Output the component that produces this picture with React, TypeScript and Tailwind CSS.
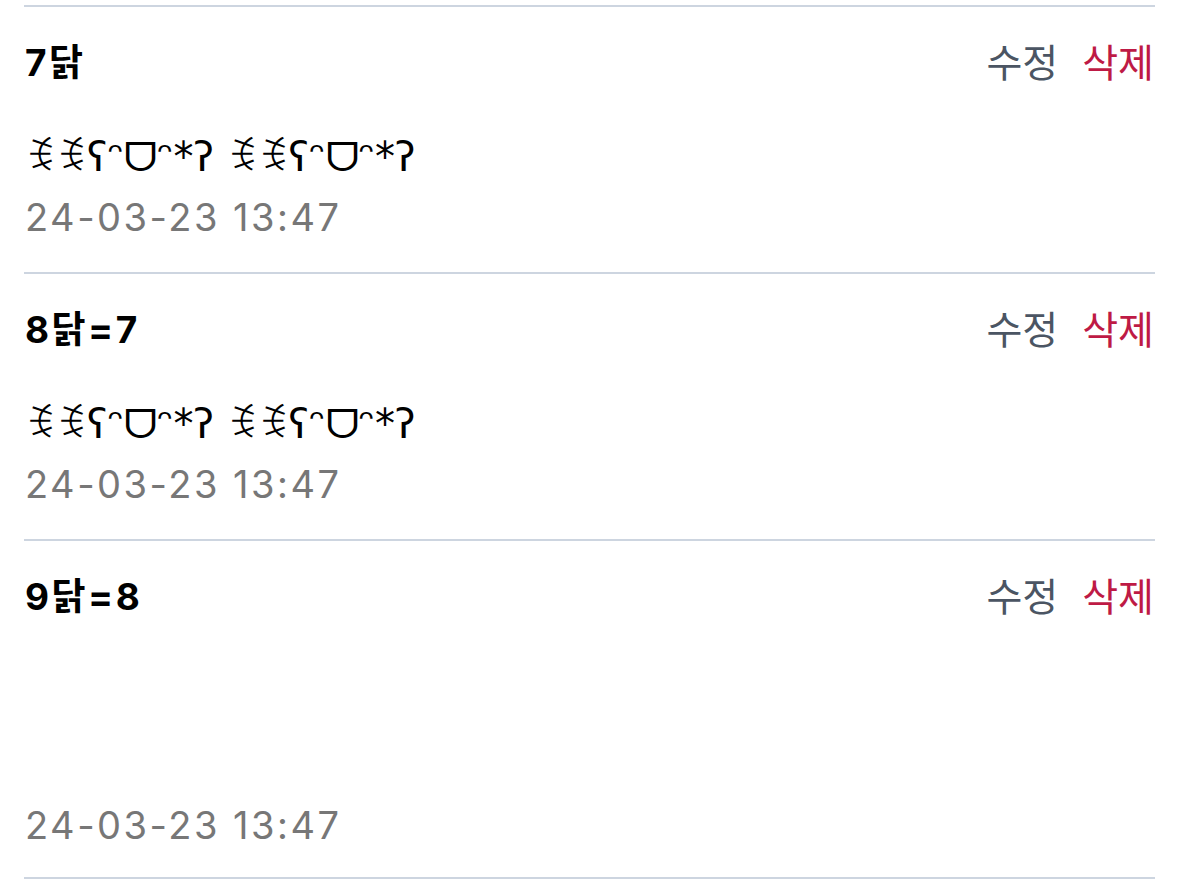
import React from "react";

type Item = { title: string; content: string; date: string };

const items: Item[] = [
  { title: "7닭", content: "ꉂꉂʕᵔᗜᵔ*ʔ ꉂꉂʕᵔᗜᵔ*ʔ", date: "24-03-23 13:47" },
  { title: "8닭=7", content: "ꉂꉂʕᵔᗜᵔ*ʔ ꉂꉂʕᵔᗜᵔ*ʔ", date: "24-03-23 13:47" },
  { title: "9닭=8", content: " \n \n ", date: "24-03-23 13:47" },
];

export default function App() {
  return (
    <div
      className="w-[1179px] h-[880px] bg-white overflow-hidden pt-[5px] px-[24px]"
      style={{ fontFamily: 'Inter, "Noto Sans CJK KR", "DejaVu Sans", sans-serif' }}
    >
      <div className="border-t-2 border-[#cdd5e0]">
        {items.map((it, i) => (
          <div key={i} className="border-b-2 border-[#cdd5e0] pt-[36px] pb-[33px] last:pb-[30px]">
            <div className="flex items-center justify-between h-[40px]">
              <div className="text-[37px] font-bold text-black leading-[40px] tracking-[2.5px] pl-[1px]">{it.title}</div>
              <div className="flex items-center gap-[24px] text-[39px] leading-[40px] pr-[1px]">
                <span className="text-[#4b5563]">수정</span>
                <span className="text-[#be1a45]">삭제</span>
              </div>
            </div>
            <div
              className="mt-[56px] text-[40px] leading-[37px] text-black whitespace-pre-wrap pl-[1px]"
              style={{ fontFamily: '"DejaVu Sans", "Noto Sans", sans-serif' }}
            >
              {it.content}
            </div>
            <div className="mt-[19px] text-[38px] leading-[44px] tracking-[2.5px] text-[#777777] pl-[1px]">{it.date}</div>
          </div>
        ))}
      </div>
    </div>
  );
}
